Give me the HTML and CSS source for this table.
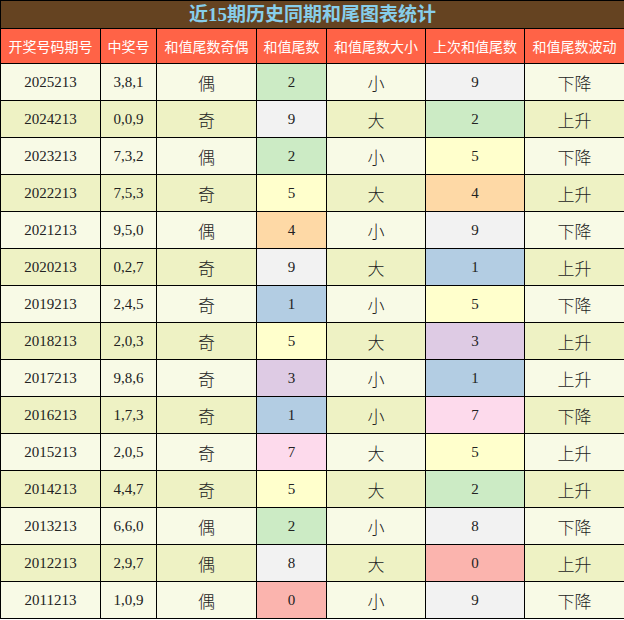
FILE: index.html
```html
<!DOCTYPE html>
<html lang="zh">
<head>
<meta charset="utf-8">
<title>近15期历史同期和尾图表统计</title>
<link rel="stylesheet" href="styles.css">
</head>
<body>
<table class="stats">
  <colgroup>
    <col class="w1"><col class="w2"><col class="w3"><col class="w4"><col class="w5"><col class="w6"><col class="w7">
  </colgroup>
  <thead>
    <tr class="title-row"><th colspan="7" class="title">近15期历史同期和尾图表统计</th></tr>
    <tr class="head-row">
      <th>开奖号码期号</th><th>中奖号</th><th>和值尾数奇偶</th><th>和值尾数</th><th>和值尾数大小</th><th>上次和值尾数</th><th>和值尾数波动</th>
    </tr>
  </thead>
  <tbody>
    <tr class="r1"><td class="num">2025213</td><td class="num">3,8,1</td><td class="zh">偶</td><td class="num c2">2</td><td class="zh">小</td><td class="num c9">9</td><td class="zh">下降</td></tr>
    <tr class="r2"><td class="num">2024213</td><td class="num">0,0,9</td><td class="zh">奇</td><td class="num c9">9</td><td class="zh">大</td><td class="num c2">2</td><td class="zh">上升</td></tr>
    <tr class="r1"><td class="num">2023213</td><td class="num">7,3,2</td><td class="zh">偶</td><td class="num c2">2</td><td class="zh">小</td><td class="num c5">5</td><td class="zh">下降</td></tr>
    <tr class="r2"><td class="num">2022213</td><td class="num">7,5,3</td><td class="zh">奇</td><td class="num c5">5</td><td class="zh">大</td><td class="num c4">4</td><td class="zh">上升</td></tr>
    <tr class="r1"><td class="num">2021213</td><td class="num">9,5,0</td><td class="zh">偶</td><td class="num c4">4</td><td class="zh">小</td><td class="num c9">9</td><td class="zh">下降</td></tr>
    <tr class="r2"><td class="num">2020213</td><td class="num">0,2,7</td><td class="zh">奇</td><td class="num c9">9</td><td class="zh">大</td><td class="num c1">1</td><td class="zh">上升</td></tr>
    <tr class="r1"><td class="num">2019213</td><td class="num">2,4,5</td><td class="zh">奇</td><td class="num c1">1</td><td class="zh">小</td><td class="num c5">5</td><td class="zh">下降</td></tr>
    <tr class="r2"><td class="num">2018213</td><td class="num">2,0,3</td><td class="zh">奇</td><td class="num c5">5</td><td class="zh">大</td><td class="num c3">3</td><td class="zh">上升</td></tr>
    <tr class="r1"><td class="num">2017213</td><td class="num">9,8,6</td><td class="zh">奇</td><td class="num c3">3</td><td class="zh">小</td><td class="num c1">1</td><td class="zh">上升</td></tr>
    <tr class="r2"><td class="num">2016213</td><td class="num">1,7,3</td><td class="zh">奇</td><td class="num c1">1</td><td class="zh">小</td><td class="num c7">7</td><td class="zh">下降</td></tr>
    <tr class="r1"><td class="num">2015213</td><td class="num">2,0,5</td><td class="zh">奇</td><td class="num c7">7</td><td class="zh">大</td><td class="num c5">5</td><td class="zh">上升</td></tr>
    <tr class="r2"><td class="num">2014213</td><td class="num">4,4,7</td><td class="zh">奇</td><td class="num c5">5</td><td class="zh">大</td><td class="num c2">2</td><td class="zh">上升</td></tr>
    <tr class="r1"><td class="num">2013213</td><td class="num">6,6,0</td><td class="zh">偶</td><td class="num c2">2</td><td class="zh">小</td><td class="num c8">8</td><td class="zh">下降</td></tr>
    <tr class="r2"><td class="num">2012213</td><td class="num">2,9,7</td><td class="zh">偶</td><td class="num c8">8</td><td class="zh">大</td><td class="num c0">0</td><td class="zh">上升</td></tr>
    <tr class="r1"><td class="num">2011213</td><td class="num">1,0,9</td><td class="zh">偶</td><td class="num c0">0</td><td class="zh">小</td><td class="num c9">9</td><td class="zh">下降</td></tr>
  </tbody>
</table>
</body>
</html>
```

FILE: styles.css
```css
html, body {
  margin: 0;
  padding: 0;
  background: #ffffff;
}

.stats {
  width: 624px;
  border-collapse: collapse;
  table-layout: fixed;
  font-family: "Liberation Serif", "Noto Sans CJK SC", serif;
  color: #222;
}

.w1 { width: 100px; }
.w2 { width: 56px; }
.w3 { width: 100px; }
.w4 { width: 70px; }
.w5 { width: 99px; }
.w6 { width: 99px; }
.w7 { width: 100px; }

.stats th,
.stats td {
  border: 1px solid #000;
  padding: 0;
  text-align: center;
  vertical-align: middle;
}

.title-row th {
  height: 27px;
  background: #654321;
  color: #87ceeb;
  font-family: "Liberation Serif", "Noto Sans CJK SC", serif;
  font-weight: bold;
  font-size: 19px;
  line-height: 27px;
}

.head-row th {
  height: 34px;
  background: #ff6347;
  color: #ffffff;
  font-family: "Noto Sans CJK SC", sans-serif;
  font-weight: normal;
  font-size: 14px;
}

.stats td {
  height: 36px;
}

.r1 td { background: #f8fae6; }
.r2 td { background: #eef2c4; }

.num {
  font-size: 15px;
}

.zh {
  font-family: "Noto Sans CJK SC", sans-serif;
  font-size: 17px;
  font-weight: 300;
}

.r1 td.c0, .r2 td.c0 { background: #fbb4ae; }
.r1 td.c1, .r2 td.c1 { background: #b3cde3; }
.r1 td.c2, .r2 td.c2 { background: #ccebc5; }
.r1 td.c3, .r2 td.c3 { background: #decbe4; }
.r1 td.c4, .r2 td.c4 { background: #fed9a6; }
.r1 td.c5, .r2 td.c5 { background: #ffffcc; }
.r1 td.c7, .r2 td.c7 { background: #fddaec; }
.r1 td.c8, .r2 td.c8 { background: #f2f2f2; }
.r1 td.c9, .r2 td.c9 { background: #f2f2f2; }
```
